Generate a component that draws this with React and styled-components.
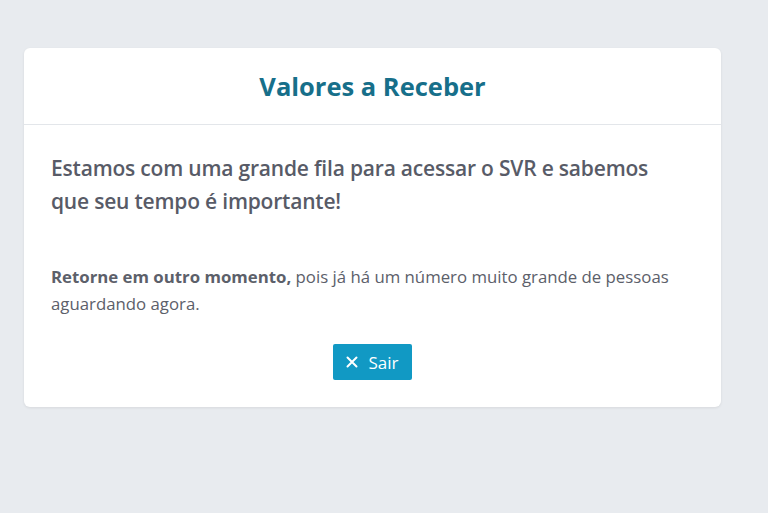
import React from "react";
import styled, { createGlobalStyle } from "styled-components";

const Global = createGlobalStyle`
  html, body { margin: 0; padding: 0; background: #e8ebef; }
  body { font-family: "Open Sans", "Noto Sans", sans-serif; }
`;

const Page = styled.div`
  padding: 48px 47px 48px 24px;
`;

const Card = styled.section`
  background: #fff;
  border-radius: 6px;
  box-shadow: 0 1px 3px rgba(0, 0, 0, 0.08);
  overflow: hidden;
`;

const Header = styled.header`
  height: 76px;
  display: flex;
  align-items: center;
  justify-content: center;
  border-bottom: 1px solid #e3e6ea;
`;

const Title = styled.h1`
  margin: 0;
  font-size: 25.5px;
  font-weight: 700;
  color: #176f8a;
`;

const Body = styled.div`
  padding: 27px 27px 27px 27px;
  display: flex;
  flex-direction: column;
`;

const Lead = styled.p`
  margin: 0;
  font-size: 21px;
  line-height: 33px;
  font-weight: 600;
  color: #585b67;
  letter-spacing: -0.2px;
`;

const Note = styled.p`
  margin: 45px 0 0;
  font-size: 16.8px;
  line-height: 27px;
  color: #5c606a;
  strong { font-weight: 700; }
`;

const Actions = styled.div`
  display: flex;
  justify-content: center;
  margin-top: 27px;
`;

const Button = styled.button`
  display: inline-flex;
  align-items: center;
  gap: 10px;
  height: 36px;
  padding: 0 13px;
  border: none;
  border-radius: 2px;
  background: #1199c4;
  color: #fff;
  font-family: inherit;
  font-size: 17px;
  cursor: pointer;
`;

export default function App() {
  return (
    <>
      <Global />
      <Page>
        <Card>
          <Header>
            <Title>Valores a Receber</Title>
          </Header>
          <Body>
            <Lead>
              Estamos com uma grande fila para acessar o SVR e sabemos
              <br />
              que seu tempo é importante!
            </Lead>
            <Note>
              <strong>Retorne em outro momento,</strong> pois já há um número muito grande de pessoas
              <br />
              aguardando agora.
            </Note>
            <Actions>
              <Button>
                <svg width="12" height="12" viewBox="0 0 12 12">
                  <path d="M1.5 1.5 L10.5 10.5 M10.5 1.5 L1.5 10.5" stroke="#fff" strokeWidth="2" strokeLinecap="round" />
                </svg>
                Sair
              </Button>
            </Actions>
          </Body>
        </Card>
      </Page>
    </>
  );
}
